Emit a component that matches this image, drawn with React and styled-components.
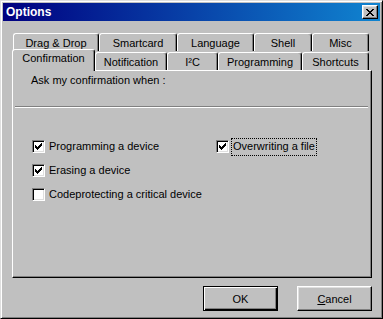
import React from 'react';
import styled, { createGlobalStyle } from 'styled-components';

const GlobalStyle = createGlobalStyle`
  html, body {
    margin: 0;
    padding: 0;
    background: #c0c0c0;
  }
  body {
    font-family: "Liberation Sans", Arial, sans-serif;
    font-size: 11px;
    color: #000;
  }
`;

const Window = styled.div`
  box-sizing: border-box;
  width: 383px;
  height: 319px;
  background: #c0c0c0;
  border: 1px solid;
  border-color: #dfdfdf #000 #000 #dfdfdf;
  box-shadow: inset 1px 1px #fff, inset -1px -1px #808080;
  padding: 2px;
  display: flex;
  flex-direction: column;
`;

const TitleBar = styled.div`
  height: 18px;
  flex-shrink: 0;
  display: flex;
  align-items: center;
  justify-content: space-between;
  padding: 0 2px 0 3px;
  background: linear-gradient(90deg, #000080 0%, #1084d0 100%);
`;

const TitleText = styled.span`
  color: #fff;
  font-weight: bold;
  font-size: 12px;
  line-height: 18px;
`;

const CloseButton = styled.div`
  box-sizing: border-box;
  width: 16px;
  height: 14px;
  display: flex;
  align-items: center;
  justify-content: center;
  background: #c0c0c0;
  border: 1px solid;
  border-color: #fff #000 #000 #fff;
  box-shadow: inset -1px -1px #808080, inset 1px 1px #dfdfdf;
`;

const Body = styled.div`
  flex: 1;
  display: flex;
  flex-direction: column;
  padding: 12px 8px 5px 9px;
`;

const TabRow = styled.div`
  display: flex;
  align-items: flex-end;
  height: ${p => p.$h}px;
  padding-left: ${p => p.$indent}px;
`;

const Tab = styled.div`
  box-sizing: border-box;
  position: relative;
  width: ${p => p.$w}px;
  height: ${p => (p.$active ? 22 : 18)}px;
  margin-bottom: ${p => (p.$active ? -1 : 0)}px;
  z-index: ${p => (p.$active ? 2 : 1)};
  display: flex;
  align-items: center;
  justify-content: center;
  padding-bottom: ${p => (p.$active ? 5 : 0)}px;
  background: #c0c0c0;
  border-left: 1px solid #fff;
  border-top: 1px solid #fff;
  border-right: 1px solid #000;
  border-radius: 3px 3px 0 0;
  box-shadow: inset -1px 0 #808080;
  white-space: nowrap;
`;

const Panel = styled.div`
  box-sizing: border-box;
  height: 208px;
  border: 1px solid;
  border-color: #fff #000 #000 #fff;
  box-shadow: inset -1px -1px #808080;
  display: flex;
  flex-direction: column;
`;

const GroupLabel = styled.div`
  margin: 3px 0 0 18px;
  line-height: 13px;
`;

const Separator = styled.div`
  margin: 19px 3px 0 2px;
  border-top: 1px solid #808080;
  border-bottom: 1px solid #fff;
`;

const OptionGrid = styled.div`
  display: grid;
  grid-template-columns: 184px 1fr;
  grid-auto-rows: 13px;
  row-gap: 11px;
  margin: 32px 0 0 19px;
`;

const Option = styled.label`
  display: flex;
  align-items: center;
  height: 13px;
  grid-column: ${p => p.$col};
  grid-row: ${p => p.$row};
`;

const Box = styled.span`
  box-sizing: border-box;
  width: 13px;
  height: 13px;
  flex-shrink: 0;
  background: #fff;
  border: 1px solid;
  border-color: #808080 #fff #fff #808080;
  box-shadow: inset 1px 1px #000, inset -1px -1px #dfdfdf;
  padding: 2px;
  display: flex;
`;

const OptionText = styled.span`
  margin-left: 2px;
  padding: 1px 1px 2px;
  line-height: 13px;
  border: 1px ${p => (p.$focus ? 'dotted #000' : 'solid transparent')};
  white-space: nowrap;
`;

const ButtonRow = styled.div`
  display: flex;
  justify-content: flex-end;
  gap: 19px;
  margin-top: 8px;
`;

const Button = styled.div`
  box-sizing: border-box;
  width: 75px;
  height: 25px;
  display: flex;
  align-items: center;
  justify-content: center;
  background: #c0c0c0;
  border: 1px solid;
  border-color: ${p => (p.$default ? '#000' : '#fff #000 #000 #fff')};
  box-shadow: ${p =>
    p.$default
      ? 'inset 1px 1px #fff, inset -1px -1px #000, inset -2px -2px #808080'
      : 'inset -1px -1px #808080, inset 1px 1px #dfdfdf'};
`;

const Mnemonic = styled.span`
  text-decoration: underline;
`;

const PixelIcon = ({ rows, color = '#000' }) => (
  <svg
    width={rows[0].length}
    height={rows.length}
    viewBox={`0 0 ${rows[0].length} ${rows.length}`}
    shapeRendering="crispEdges"
    style={{ display: 'block' }}
  >
    {rows.flatMap((r, y) =>
      r.split('').map((c, x) =>
        c === '#' ? <rect key={`${x}-${y}`} x={x} y={y} width="1" height="1" fill={color} /> : null
      )
    )}
  </svg>
);

const closeRows = [
  '##....##',
  '.##..##.',
  '..####..',
  '...##...',
  '..####..',
  '.##..##.',
  '##....##',
];

const checkRows = [
  '......#',
  '.....##',
  '#...###',
  '##.###.',
  '#####..',
  '.###...',
  '..#....',
];

const topTabs = [
  { label: 'Drag & Drop', w: 86 },
  { label: 'Smartcard', w: 78 },
  { label: 'Language', w: 77 },
  { label: 'Shell', w: 58 },
  { label: 'Misc', w: 57 },
];

const bottomTabs = [
  { label: 'Confirmation', w: 83, active: true },
  { label: 'Notification', w: 72 },
  { label: 'I²C', w: 51 },
  { label: 'Programming', w: 84 },
  { label: 'Shortcuts', w: 67 },
];

const options = [
  { label: 'Programming a device', checked: true, col: 1, row: 1 },
  { label: 'Erasing a device', checked: true, col: 1, row: 2 },
  { label: 'Codeprotecting a critical device', checked: false, col: 1, row: 3 },
  { label: 'Overwriting a file', checked: true, col: 2, row: 1, focus: true },
];

export default function App() {
  return (
    <>
      <GlobalStyle />
      <Window>
        <TitleBar>
          <TitleText>Options</TitleText>
          <CloseButton>
            <PixelIcon rows={closeRows} />
          </CloseButton>
        </TitleBar>
        <Body>
          <TabRow $h={18} $indent={1}>
            {topTabs.map(t => (
              <Tab key={t.label} $w={t.w}>{t.label}</Tab>
            ))}
          </TabRow>
          <TabRow $h={19} $indent={0}>
            {bottomTabs.map(t => (
              <Tab key={t.label} $w={t.w} $active={t.active}>{t.label}</Tab>
            ))}
          </TabRow>
          <Panel>
            <GroupLabel>Ask my confirmation when :</GroupLabel>
            <Separator />
            <OptionGrid>
              {options.map(o => (
                <Option key={o.label} $col={o.col} $row={o.row}>
                  <Box>{o.checked && <PixelIcon rows={checkRows} />}</Box>
                  <OptionText $focus={o.focus}>{o.label}</OptionText>
                </Option>
              ))}
            </OptionGrid>
          </Panel>
          <ButtonRow>
            <Button $default>OK</Button>
            <Button><span><Mnemonic>C</Mnemonic>ancel</span></Button>
          </ButtonRow>
        </Body>
      </Window>
    </>
  );
}
